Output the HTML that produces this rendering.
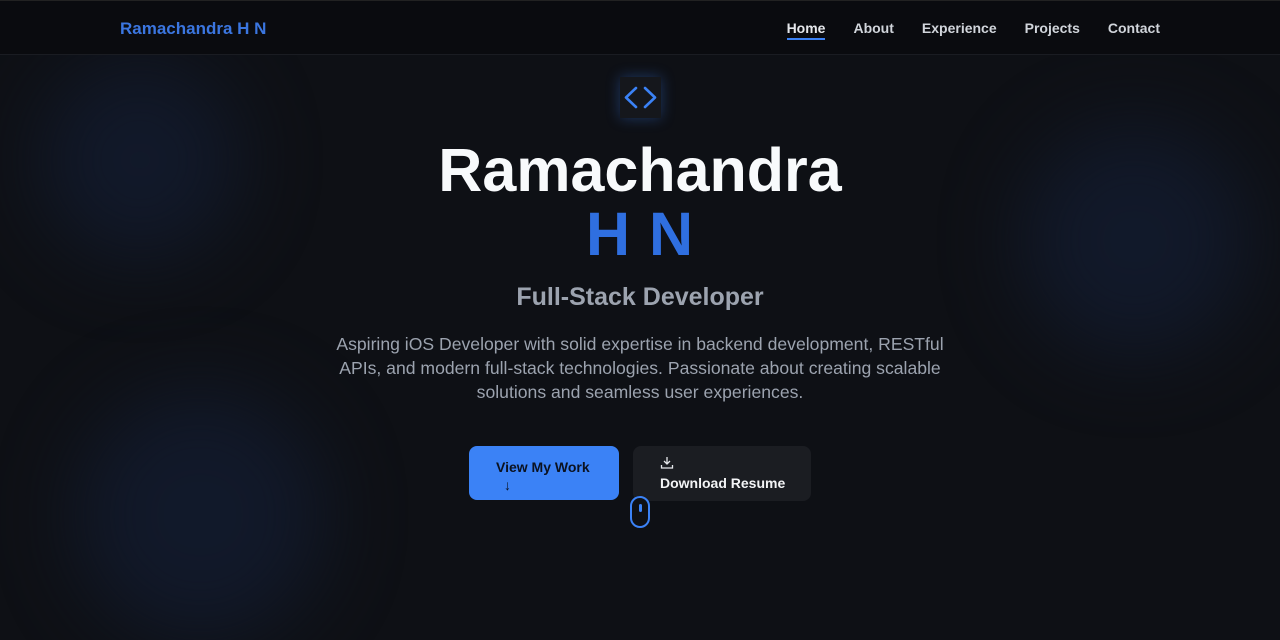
<!DOCTYPE html>
<html><head><meta charset="utf-8"><style>
*{margin:0;padding:0;box-sizing:border-box}
body{width:1280px;height:627px;overflow:hidden;background:#0e1015;font-family:"Liberation Sans",sans-serif;position:relative}
.blob{position:absolute;border-radius:50%;filter:blur(40px);background:#131c31;opacity:.75}
nav{position:absolute;top:0;left:0;width:1280px;height:55px;background:#0a0b0f;border-bottom:1px solid #1a1c22;border-top:1px solid #222}
.logo{position:absolute;left:120px;top:18px;color:#3b76e0;font-weight:bold;font-size:17px}
.links{position:absolute;top:19px;right:120px;display:flex;gap:28px;font-size:14px;color:#d1d5db;font-weight:bold}
.links span.act{color:#e5e7eb;border-bottom:2px solid #3b82f6;padding-bottom:2px}
.icon{position:absolute;left:620px;top:77px;width:41px;height:41px;background:#15171c;box-shadow:0 0 14px rgba(59,130,246,.35)}
h1{position:absolute;top:136px;width:1280px;text-align:center;color:#f8fafc;font-size:61px;font-weight:bold;line-height:68px}
h1 .b{display:block;color:#2f6fe0;letter-spacing:1px;line-height:60px}
h2{position:absolute;top:283px;width:1280px;text-align:center;color:#9ca3af;font-size:25px;font-weight:bold}
p{position:absolute;top:332px;left:322px;width:636px;text-align:center;color:#9ca3af;font-size:17.6px;line-height:24px}
.b1{position:absolute;left:469px;top:446px;width:150px;height:54px;background:#3b82f6;border-radius:8px;color:#0b1220;font-weight:bold;font-size:14px;padding:12px 0 0 27px;line-height:18px}
.b2{position:absolute;left:633px;top:446px;width:178px;height:55px;background:#1b1d22;border-radius:8px;color:#f3f4f6;font-weight:bold;font-size:14px;padding:10px 0 0 27px;line-height:18px}
.mouse{position:absolute;left:630px;top:496px;width:20px;height:32px;border:2px solid #3b82f6;border-radius:10px;background:#0e1015}
.mouse i{position:absolute;left:7px;top:6px;width:3px;height:8px;background:#3b82f6;border-radius:2px}
</style></head><body>
<div class="blob" style="left:40px;top:60px;width:200px;height:200px"></div>
<div class="blob" style="left:1020px;top:125px;width:230px;height:230px"></div>
<div class="blob" style="left:75px;top:390px;width:250px;height:250px"></div>
<nav><div class="logo">Ramachandra H N</div>
<div class="links"><span class="act">Home</span><span>About</span><span>Experience</span><span>Projects</span><span>Contact</span></div></nav>
<div class="icon"><svg width="41" height="41" viewBox="0 0 41 41" fill="none" stroke="#3b82f6" stroke-width="2.6" stroke-linecap="round" stroke-linejoin="round"><path d="M16 11L6 20.5 16 30M25 11l10 9.5L25 30"/></svg></div>
<h1>Ramachandra<span class="b">H N</span></h1>
<h2>Full-Stack Developer</h2>
<p>Aspiring iOS Developer with solid expertise in backend development, RESTful APIs, and modern full-stack technologies. Passionate about creating scalable solutions and seamless user experiences.</p>
<div class="b1">View My Work<br><span style="padding-left:8px;font-weight:normal">↓</span></div>
<div class="b2"><svg width="14" height="14" viewBox="0 0 14 14" fill="none" stroke="#e5e7eb" stroke-width="1.3"><path d="M7 1v7M4 5l3 3 3-3M1.5 9v3h11V9"/></svg><br>Download Resume</div>
<div class="mouse"><i></i></div>
</body></html>
